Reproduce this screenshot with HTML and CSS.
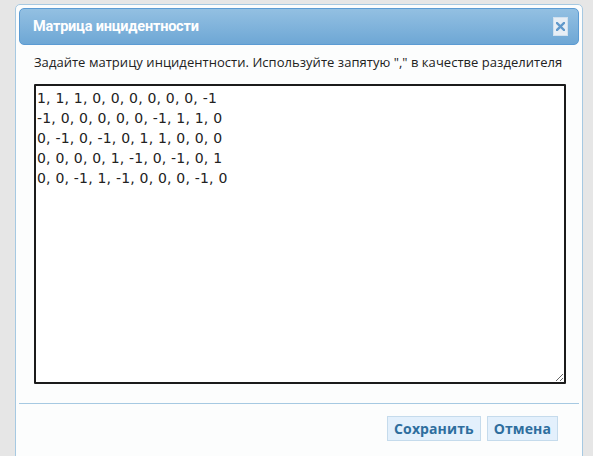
FILE: index.html
```html
<!DOCTYPE html>
<html>
<head>
<meta charset="utf-8">
<link rel="stylesheet" href="styles.css">
</head>
<body>
<div class="dialog">
  <div class="header">
    <span class="title">Матрица инцидентности</span>
    <span class="close"><svg width="9" height="9" viewBox="0 0 9 9"><path d="M1 1 L8 8 M8 1 L1 8" stroke="#6199cb" stroke-width="2.4" stroke-linecap="square"/></svg></span>
  </div>
  <div class="content">
    <p class="hint">Задайте матрицу инцидентности. Используйте запятую "," в качестве разделителя</p>
    <textarea class="matrix">1, 1, 1, 0, 0, 0, 0, 0, 0, -1
-1, 0, 0, 0, 0, 0, -1, 1, 1, 0
0, -1, 0, -1, 0, 1, 1, 0, 0, 0
0, 0, 0, 0, 1, -1, 0, -1, 0, 1
0, 0, -1, 1, -1, 0, 0, 0, -1, 0</textarea>
  </div>
  <div class="buttons">
    <button class="btn">Сохранить</button>
    <button class="btn">Отмена</button>
  </div>
</div>
</body>
</html>
```
FILE: styles.css
```css
html, body {
  margin: 0;
  padding: 0;
  background: #e6e6e6;
}
body {
  padding: 4px 0 0 15px;
  font-family: "Open Sans", "Liberation Sans", sans-serif;
}
.dialog {
  box-sizing: border-box;
  width: 568px;
  height: 480px;
  border: 1px solid #a6c9e2;
  border-radius: 5px;
  background: #fcfdfd;
  padding: 3px;
}
.header {
  box-sizing: border-box;
  height: 37px;
  border: 1px solid #5b9bd3;
  border-radius: 5px;
  background: linear-gradient(#93c0e2, #6ea7d5);
  display: flex;
  align-items: center;
  justify-content: space-between;
  padding: 0 10px 0 13px;
}
.title {
  color: #fff;
  font-family: "Liberation Sans Narrow", Roboto, sans-serif;
  font-weight: bold;
  font-size: 14.5px;
  letter-spacing: -0.2px;
}
.close {
  box-sizing: border-box;
  width: 15px;
  height: 19px;
  background: #e7eef5;
  border: 1px solid #d0e0ee;
  display: flex;
  align-items: center;
  justify-content: center;
}
.content {
  padding: 0 0 0 15px;
  border-bottom: 1px solid #a6c9e2;
  height: 358px;
}
.hint {
  margin: 0;
  padding-top: 8px;
  font-size: 13px;
  line-height: 18px;
  color: #222;
  letter-spacing: 0.04px;
}
.matrix {
  display: block;
  box-sizing: border-box;
  margin-top: 13px;
  width: 532px;
  height: 300px;
  border: 2px solid #1b1b1b;
  border-radius: 1px;
  padding: 2px 0 0 1px;
  font-family: "DejaVu Sans", sans-serif;
  font-size: 14px;
  line-height: 20px;
  letter-spacing: 0.2px;
  color: #222;
  background: #fff;
  resize: both;
  outline: none;
}
.buttons {
  display: flex;
  justify-content: flex-end;
  gap: 6px;
  padding: 12px 21px 0 0;
}
.btn {
  box-sizing: border-box;
  height: 25px;
  padding: 0 6px;
  background: #e3f0fc;
  border: 1px solid #c5dbec;
  color: #2e6e9e;
  font-family: "Open Sans", "Liberation Sans", sans-serif;
  font-weight: bold;
  font-size: 14px;
  letter-spacing: 0.1px;
}
```
